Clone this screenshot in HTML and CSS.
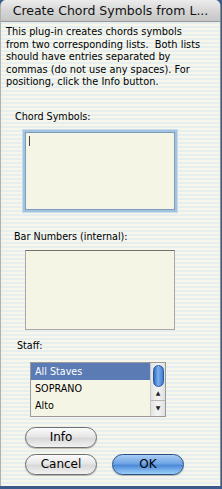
FILE: index.html
```html
<!DOCTYPE html>
<html lang="en">
<head>
    <meta charset="UTF-8">
    <title>Create Chord Symbols from Lists</title>
    <link rel="stylesheet" href="styles.css">
</head>
<body>
    <div class="window">
        <div class="titlebar">Create Chord Symbols from L...</div>
        <div class="content">
            <p class="intro">This plug-in creates chords symbols<br>from two corresponding lists.&nbsp; Both lists<br>should have entries separated by<br>commas (do not use any spaces). For<br>positiong, click the Info button.</p>

            <div class="field-label chord">Chord Symbols:</div>
            <div class="text-box focused"><span class="caret"></span></div>

            <div class="field-label bars">Bar Numbers (internal):</div>
            <div class="text-box"></div>

            <div class="field-label staff">Staff:</div>
            <div class="list-box">
                <ul class="list-items">
                    <li class="selected">All Staves</li>
                    <li>SOPRANO</li>
                    <li>Alto</li>
                </ul>
                <div class="scrollbar">
                    <div class="thumb"></div>
                    <div class="arrow up">&#9650;</div>
                    <div class="arrow down">&#9660;</div>
                </div>
            </div>

            <div class="button-row info-row">
                <button class="aqua-btn">Info</button>
            </div>
            <div class="button-row">
                <button class="aqua-btn">Cancel</button>
                <button class="aqua-btn default">OK</button>
            </div>
        </div>
    </div>
</body>
</html>
```

FILE: styles.css
```css
* {
    margin: 0;
    padding: 0;
    box-sizing: border-box;
}

body {
    width: 222px;
    height: 489px;
    background: #3a5a8c;
    font-family: 'DejaVu Sans', Verdana, sans-serif;
    color: #000;
    overflow: hidden;
}

.window {
    width: 221px;
    height: 486px;
    border-left: 1px solid #b0b0b0;
    border-right: 1px solid #8c8c8c;
    border-radius: 6px 6px 0 0;
    overflow: hidden;
    background: repeating-linear-gradient(to bottom, #f6f6ea 0, #f6f6ea 2px, #e6eef0 2px, #e6eef0 4px);
}

.titlebar {
    height: 22px;
    line-height: 22px;
    text-align: center;
    font-size: 12.5px;
    color: #111;
    background: linear-gradient(to bottom, #ececec 0%, #d6d6d6 50%, #c6c6c6 100%);
    border-bottom: 1px solid #9a9a9a;
    white-space: nowrap;
}

.content {
    padding: 4px 0 0 4px;
}

.intro {
    font-size: 9.8px;
    line-height: 12.5px;
    white-space: nowrap;
    margin-left: 1px;
}

.field-label {
    font-size: 9.6px;
    line-height: 12px;
}

.field-label.chord {
    margin: 22px 0 0 10px;
}

.field-label.bars {
    margin: 21px 0 0 9px;
}

.field-label.staff {
    margin: 10px 0 0 12px;
}

.text-box {
    width: 150px;
    height: 80px;
    margin: 7px 0 0 20px;
    background: #f5f5e6;
    border: 1px solid #a8a8a8;
    border-top-color: #6f6f6f;
}

.text-box.focused {
    height: 78px;
    margin-top: 9px;
    border: 1px solid #7d9cbe;
    box-shadow: 0 0 0 2px #a2c3de, 0 0 0 3px #c9dcec;
    position: relative;
}

.caret {
    position: absolute;
    left: 3px;
    top: 3px;
    width: 1px;
    height: 10px;
    background: #444;
}

.list-box {
    display: flex;
    width: 136px;
    height: 55px;
    margin: 10px 0 0 25px;
    border: 1px solid #9a9a9a;
    background: #f5f5e6;
}

.list-items {
    list-style: none;
    flex: 1;
    font-size: 9.6px;
}

.list-items li {
    height: 17px;
    line-height: 17px;
    padding-left: 4px;
}

.list-items li.selected {
    background: #5a7bb4;
    color: #fff;
}

.scrollbar {
    width: 15px;
    border-left: 1px solid #c8c8c8;
    background: linear-gradient(to right, #e4e4e4, #f4f4f4, #e0e0e0);
    display: flex;
    flex-direction: column;
    align-items: center;
}

.thumb {
    width: 11px;
    height: 22px;
    margin-top: 2px;
    border-radius: 6px;
    border: 1px solid #2b5a9c;
    background: linear-gradient(to right, #2d6ac0, #7fb0ee 45%, #3c7ad0);
}

.arrow {
    font-size: 6px;
    line-height: 14px;
    color: #222;
    height: 14px;
    width: 100%;
    text-align: center;
}

.arrow.up {
    height: 13px;
    line-height: 11px;
}

.arrow.down {
    border-top: 1px solid #b8b8b8;
}

.button-row {
    display: flex;
    gap: 15px;
    margin-left: 20px;
    margin-top: 6px;
}

.button-row.info-row {
    margin-top: 10px;
}

.aqua-btn {
    width: 72px;
    height: 21px;
    border-radius: 11px;
    border: 1px solid #6f6f6f;
    background: linear-gradient(to bottom, #fbfbfb 0%, #e6e6e6 45%, #d8d8d8 55%, #f2f2f2 100%);
    font-family: 'DejaVu Sans', Verdana, sans-serif;
    font-size: 12px;
    color: #000;
    box-shadow: 0 1px 1px rgba(0, 0, 0, 0.25);
}

.aqua-btn.default {
    border-color: #2a4e86;
    background: linear-gradient(to bottom, #a9cdf4 0%, #6ea4e4 45%, #4c8ad8 55%, #9cd0f8 100%);
}
```
